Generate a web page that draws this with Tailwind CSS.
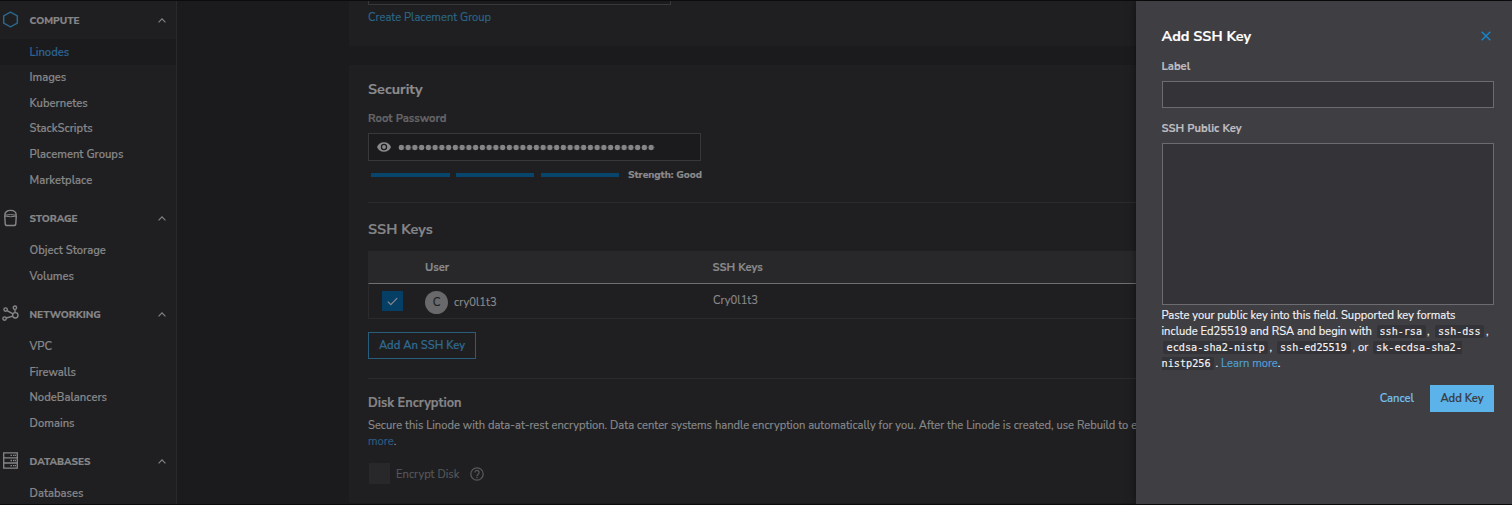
<!DOCTYPE html>
<html lang="en">
<head>
<meta charset="utf-8">
<title>Add SSH Key</title>
<script src="https://cdn.jsdelivr.net/npm/@tailwindcss/browser@4"></script>
</head>
<body class="h-[505px] w-[1512px] overflow-hidden bg-[#1b1b1d] font-['Nunito_Sans','Lato',sans-serif] text-[11.2px] text-[#8a8a8c] [-webkit-text-stroke:0.150px]">
<svg class="hidden">
  <symbol id="chev" viewBox="0 0 8 5"><path d="M.6 4.3 4 .9l3.400 3.400" fill="none" stroke="currentColor" stroke-width="1.100"/></symbol>
</svg>
<div class="flex h-[505px] border-y border-[#0c0c0e]">
  <nav class="flex w-[177px] shrink-0 flex-col border-r border-[#29292b] bg-[#1f1f21] font-semibold text-[#868688]">
    <div class="flex h-[38.200px] shrink-0 items-center pr-[10px] pl-[2px] text-[10.080px] font-extrabold">
      <svg class="mb-[2px] h-[17px] w-[17px] text-[#2b668b]" viewBox="0 0 17 17"><path d="M8.500 1.100 15.300 4.800v7.400L8.500 15.900 1.700 12.200V4.800Z" fill="none" stroke="currentColor" stroke-width="1.500" stroke-linejoin="round"/></svg>
      <span class="ml-[10.500px] flex-1 pt-[2px]"><span>COMPUTE</span></span><svg class="h-[5px] w-2"><use href="#chev"/></svg>
    </div>
    <div class="flex h-[25.600px] shrink-0 items-center bg-[#1b1b1d] pt-[2.200px] pl-[29.500px] text-[#2c6391]"><span>Linodes</span></div>
    <div class="flex h-[25.600px] shrink-0 items-center pt-[2.200px] pl-[29.500px]"><span>Images</span></div>
    <div class="flex h-[25.600px] shrink-0 items-center pt-[2.200px] pl-[29.500px]"><span>Kubernetes</span></div>
    <div class="flex h-[25.600px] shrink-0 items-center pt-[2.200px] pl-[29.500px]"><span>StackScripts</span></div>
    <div class="flex h-[25.600px] shrink-0 items-center pt-[2.200px] pl-[29.500px]"><span>Placement Groups</span></div>
    <div class="flex h-[25.600px] shrink-0 items-center pt-[2.200px] pl-[29.500px]"><span>Marketplace</span></div>
    <div class="flex h-[44.800px] shrink-0 items-center pt-[6px] pr-[10px] pl-[2px] text-[10.080px] font-extrabold">
      <svg class="mb-[1px] h-[18px] w-[17px]" viewBox="0 0 17 18" fill="none" stroke="currentColor" stroke-width="1.400"><path d="M2.800 6.200C2.800 3 5.200 1.400 8.500 1.400S14.200 3 14.200 6.200"/><path d="M2.700 6.200 3.200 14.600Q3.300 16.500 5.200 16.500h6.600q1.900 0 2-1.900l.5-8.400"/><path d="M2.800 6.200q5.700-1.300 11.400 0M3 7.100q5.500 1.300 11 0" stroke-width="1"/></svg>
      <span class="ml-[10.500px] flex-1 pt-[2px]"><span>STORAGE</span></span><svg class="h-[5px] w-2"><use href="#chev"/></svg>
    </div>
    <div class="flex h-[25.600px] shrink-0 items-center pt-[2.200px] pl-[29.500px]"><span>Object Storage</span></div>
    <div class="flex h-[25.600px] shrink-0 items-center pt-[2.200px] pl-[29.500px]"><span>Volumes</span></div>
    <div class="flex h-[44.800px] shrink-0 items-center pt-[6px] pr-[10px] pl-[2px] text-[10.080px] font-extrabold">
      <svg class="mb-[2px] h-[17px] w-[17px]" viewBox="0 0 17 17" fill="none" stroke="currentColor" stroke-width="1.400"><circle cx="13.300" cy="10.300" r="2.700"/><circle cx="3.600" cy="4.600" r="1.700"/><circle cx="2.600" cy="13.600" r="1.700"/><circle cx="12.900" cy="2.700" r="1.700"/><path d="M5 5.600l6 3.300M4.200 13l6.700-1.900M13 4.400v3.200"/></svg>
      <span class="ml-[10.500px] flex-1 pt-[2px]"><span>NETWORKING</span></span><svg class="h-[5px] w-2"><use href="#chev"/></svg>
    </div>
    <div class="flex h-[25.600px] shrink-0 items-center pt-[2.200px] pl-[29.500px]"><span>VPC</span></div>
    <div class="flex h-[25.600px] shrink-0 items-center pt-[2.200px] pl-[29.500px]"><span>Firewalls</span></div>
    <div class="flex h-[25.600px] shrink-0 items-center pt-[2.200px] pl-[29.500px]"><span>NodeBalancers</span></div>
    <div class="flex h-[25.600px] shrink-0 items-center pt-[2.200px] pl-[29.500px]"><span>Domains</span></div>
    <div class="flex h-[44.800px] shrink-0 items-center pt-[6px] pr-[10px] pl-[2px] text-[10.080px] font-extrabold">
      <svg class="mb-[2px] h-[17px] w-[17px]" viewBox="0 0 17 17" fill="none" stroke="currentColor" stroke-width="1.300"><path d="M1.700.8h13.600v15.400H1.700ZM1.700 5.900h13.600M1.700 11h13.600"/><path d="M8.500 3.400h1.500m1 0h1.500m.500 0h1M8.500 8.500h1.500m1 0h1.500m.500 0h1M8.500 13.600h1.500m1 0h1.500m.500 0h1"/></svg>
      <span class="ml-[10.500px] flex-1 pt-[2px]"><span>DATABASES</span></span><svg class="h-[5px] w-2"><use href="#chev"/></svg>
    </div>
    <div class="flex h-[24px] shrink-0 items-center pt-[3.500px] pl-[29.500px]"><span>Databases</span></div>
  </nav>

  <main class="flex w-[959px] shrink-0 flex-col overflow-hidden pl-[172px] whitespace-nowrap">
    <section class="flex h-[45px] shrink-0 flex-col bg-[#1f1f21] pl-[19px]">
      <div class="h-[4px] w-[303px] shrink-0 border border-t-0 border-[#38383b] bg-[#1b1b1d]"></div>
      <div class="flex h-[27px] items-center text-[#2b6788]"><span>Create Placement Group</span></div>
    </section>
    <section class="mt-[19px] flex h-[438px] shrink-0 flex-col bg-[#1f1f21] pl-[19px]">
      <h2 class="mt-[14px] flex h-5 shrink-0 items-center pt-[2px] text-[14.400px] font-bold text-[#8c8c8e]"><span>Security</span></h2>
      <div class="mt-[9px] flex h-5 shrink-0 items-center pt-[2px] font-bold text-[#656568]"><span>Root Password</span></div>
      <div class="mt-[5px] flex h-[28px] w-[333px] shrink-0 items-center border border-[#38383b] bg-[#1b1b1d] pl-[8px]">
        <svg class="h-[10px] w-[14px] text-[#8a8a8c]" viewBox="0 0 14 10"><path fill-rule="evenodd" fill="currentColor" d="M7 .2C3.800.2 1.100 2.200 0 5c1.100 2.800 3.800 4.800 7 4.800S12.900 7.800 14 5C12.900 2.200 10.200.2 7 .2ZM7 8.200A3.200 3.200 0 1 1 7 1.800a3.200 3.200 0 0 1 0 6.400ZM7 3.100A1.900 1.900 0 1 0 7 6.900 1.900 1.900 0 0 0 7 3.100Z"/></svg>
        <div class="ml-[7px] h-[7px] w-[257px] bg-[radial-gradient(circle_at_center,#858587_2.500px,transparent_3.100px)] bg-[length:6.760px_7px]"></div>
      </div>
      <div class="mt-[4px] flex h-5 shrink-0 items-center pl-[3px]">
        <i class="h-[4px] w-[79px] bg-[#08456c]"></i><i class="ml-[6px] h-[4px] w-[78px] bg-[#08456c]"></i><i class="ml-[7px] h-[4px] w-[78px] bg-[#08456c]"></i>
        <span class="ml-[9px] pt-[2px] text-[10.200px] font-extrabold">Strength: Good</span>
      </div>
      <div class="mt-[17px] h-px shrink-0 bg-[#2b2b2d]"></div>
      <h2 class="mt-[16px] flex h-5 shrink-0 items-center pt-[2px] text-[14.400px] font-bold text-[#858587]"><span>SSH Keys</span></h2>
      <div class="mt-[12px] flex h-[32px] shrink-0 items-center bg-[#28282a] pt-[2px] pl-[57px] font-bold">
        <div class="w-[287.500px]"><span>User</span></div><span>SSH Keys</span>
      </div>
      <div class="flex h-[36px] shrink-0 border-t border-b border-l border-t-[#707072] border-b-[#2b2b2d] border-l-[#2b2b2d]">
        <div class="mt-[7px] ml-[13px] flex h-[20px] w-[21px] items-center justify-center bg-[#053f66]"><svg class="h-[9px] w-[11px]" viewBox="0 0 11 9"><path d="M.8 4.600 3.800 7.600 10.200 1.100" fill="none" stroke="#858587" stroke-width="1.300"/></svg></div>
        <div class="mt-[7px] ml-[22px] flex h-[23px] w-[23px] items-center justify-center rounded-full bg-[#69696b] text-[11.500px] text-[#1b1b1d]">C</div>
        <div class="ml-[6px] flex h-[36px] w-[259px] items-center pt-[3px]"><span>cry0l1t3</span></div>
        <div class="flex h-[33px] items-center pt-[2px]"><span>Cry0l1t3</span></div>
      </div>
      <div class="mt-[13px] flex h-[27px] w-[108px] shrink-0 items-center justify-center border border-[#285d7b] pt-[2px] font-semibold text-[#2f698f]"><span>Add An SSH Key</span></div>
      <div class="mt-[19px] h-px shrink-0 bg-[#2b2b2d]"></div>
      <h3 class="mt-[14px] flex h-5 shrink-0 items-center pt-[2px] text-[12.800px] font-bold text-[#858587]"><span>Disk Encryption</span></h3>
      <div class="mt-[5px] flex h-4 shrink-0 items-center"><span>Secure this Linode with data-at-rest encryption. Data center systems handle encryption automatically for you. After the Linode is created, use Rebuild to enable</span></div>
      <div class="flex h-4 shrink-0 items-center"><span><span class="text-[#2b5d87]">more</span>.</span></div>
      <div class="mt-[13px] flex h-[21px] shrink-0 items-center pl-px text-[#58585a]">
        <i class="h-[21px] w-[21px] bg-[#28282a]"></i><span class="ml-[6px] w-[74px] pt-[3.500px]">Encrypt Disk</span>
        <svg class="h-[14px] w-[14px]" viewBox="0 0 14 14" fill="none" stroke="currentColor" stroke-width="1.300"><circle cx="7" cy="7" r="6.200"/><path d="M4.900 5.500a2.100 2.100 0 1 1 3.500 1.600C7.500 7.800 7 8 7 8.900"/><path d="M7 9.800v1.400"/></svg>
      </div>
    </section>
  </main>

  <aside class="flex w-[376px] shrink-0 flex-col bg-[#3f3e43] pr-[18px] pl-[25.500px] whitespace-nowrap text-[#f4f4f6] shadow-[0_0_8px_rgba(0,0,0,0.5)]">
    <div class="mt-[23px] flex h-[22px] shrink-0 items-center justify-between pr-[3px]">
      <h1 class="pt-[3px] text-[14.400px] font-bold text-white"><span>Add SSH Key</span></h1>
      <svg class="mt-[1px] h-[10px] w-[10px]" viewBox="0 0 10 10"><path d="m.7.7 8.600 8.600m0-8.600L.7 9.300" stroke="#1487d0" stroke-width="1.400"/></svg>
    </div>
    <div class="mt-[10px] flex h-5 shrink-0 items-center pt-[2px] font-bold text-[#bdbdc1]"><span>Label</span></div>
    <div class="mt-[5px] ml-[.5px] h-[27px] shrink-0 border border-[#6c6b70] bg-[#343338]"></div>
    <div class="mt-[10px] flex h-5 shrink-0 items-center pt-[2px] font-bold text-[#bdbdc1]"><span>SSH Public Key</span></div>
    <div class="mt-[5px] ml-[.5px] h-[162px] shrink-0 border border-[#6c6b70] bg-[#343338]"></div>
    <div class="mt-[2px] shrink-0 leading-4">
      <div class="h-4 pt-px"><span>Paste your public key into this field. Supported key formats</span></div>
      <div class="flex h-4 items-center"><span class="w-[215px] pt-[2px]">include Ed25519 and RSA and begin with</span><code class="w-[49px] rounded-xs bg-[#343338] pl-[3px] font-['DejaVu_Sans_Mono',monospace] text-[10.080px] leading-[13px]">ssh-rsa</code><span class="w-[9.500px] pt-[2px] pl-[1.500px]">,</span><code class="w-[49px] rounded-xs bg-[#343338] pl-[3px] font-['DejaVu_Sans_Mono',monospace] text-[10.080px] leading-[13px]">ssh-dss</code><span class="pt-[2px] pl-[2px]">,</span></div>
      <div class="flex h-4 items-center pl-[1.500px]"><code class="w-[105px] rounded-xs bg-[#343338] pl-[3.500px] font-['DejaVu_Sans_Mono',monospace] text-[10.200px] leading-[13px]">ecdsa-sha2-nistp</code><span class="w-[9px] pt-[2px] pl-[1.500px]">,</span><code class="w-[74px] rounded-xs bg-[#343338] pl-[3px] font-['DejaVu_Sans_Mono',monospace] text-[10.080px] leading-[13px]">ssh-ed25519</code><span class="w-[22px] pt-[2px] pl-[1.500px]">, or</span><code class="w-[89px] rounded-l-xs bg-[#343338] pl-[3px] font-['DejaVu_Sans_Mono',monospace] text-[10.200px] leading-[13px]">sk-ecdsa-sha2-</code></div>
      <div class="flex h-4 items-center"><code class="w-[52px] rounded-r-xs bg-[#343338] font-['DejaVu_Sans_Mono',monospace] text-[10.200px] leading-[13px]">nistp256</code><span class="w-[7.500px] pt-[2px] pl-[2px]">.</span><span class="pt-[2px]"><span class="text-[#4fa1da]">Learn more</span>.</span></div>
    </div>
    <div class="mt-[14px] flex h-[27px] shrink-0 items-center justify-end font-semibold">
      <span class="mr-[16px] pt-[2px] text-[#74bfee]">Cancel</span>
      <div class="flex h-[27px] w-[64px] items-center justify-center bg-[#5bb3ea] pt-[2px] text-[#3a3a3f]"><span>Add Key</span></div>
    </div>
  </aside>
</div>
</body>
</html>
